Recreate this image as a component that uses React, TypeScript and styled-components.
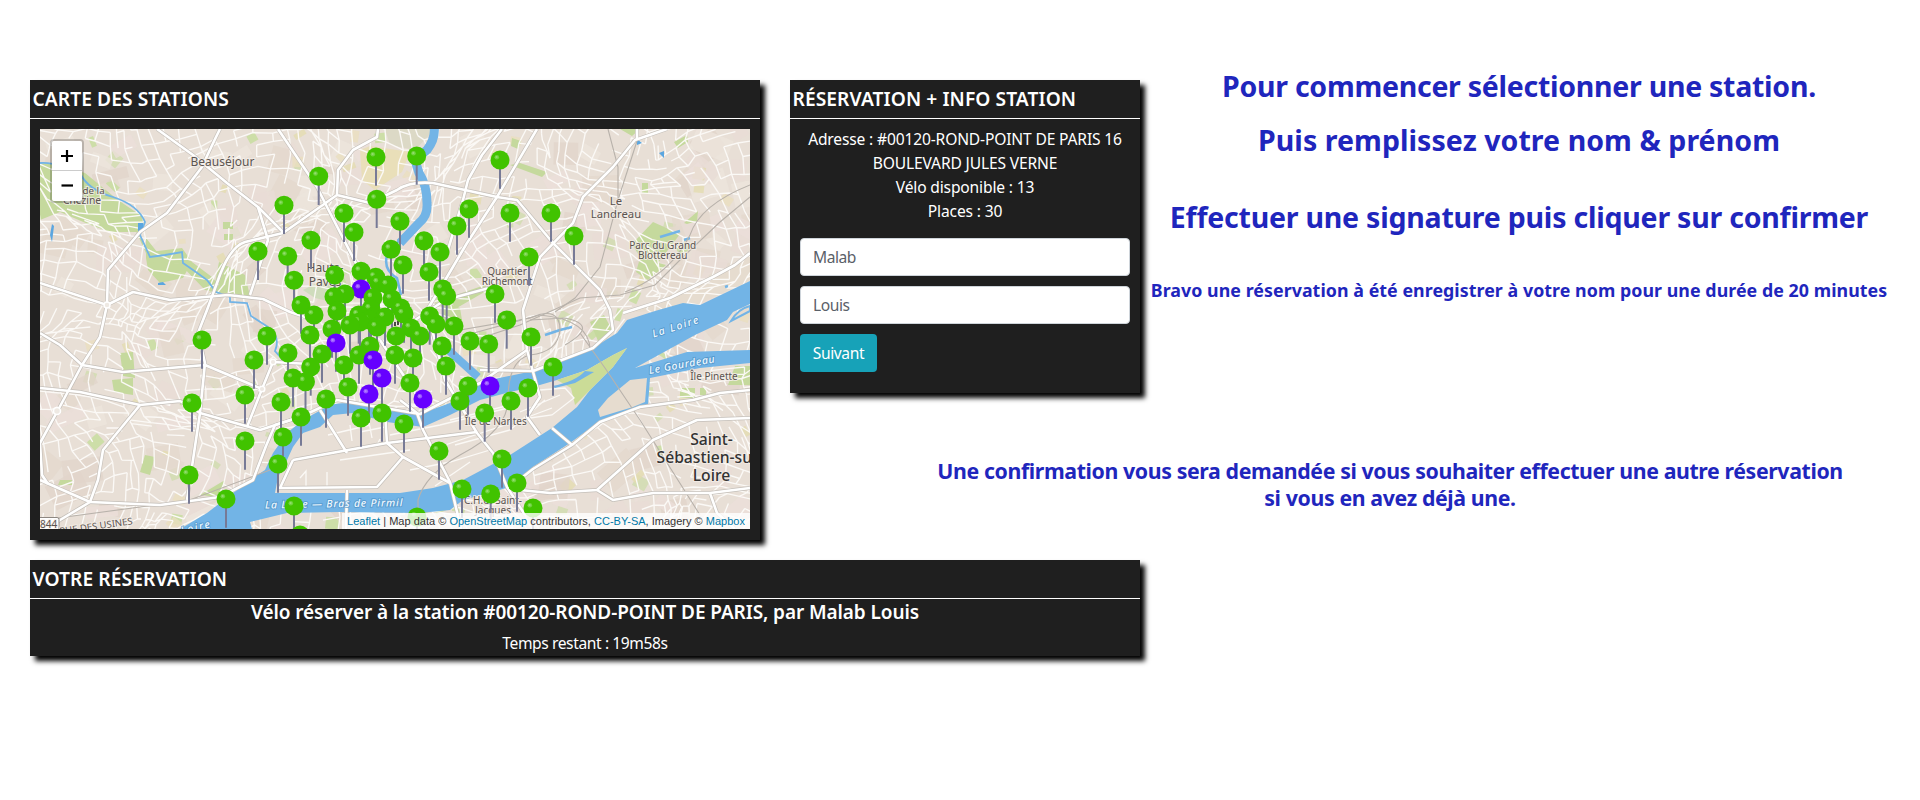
import React from 'react';
import styled, { createGlobalStyle } from 'styled-components';

const GlobalStyle = createGlobalStyle`
  * { box-sizing: border-box; }
  body { margin: 0; background: #fff; font: 15.6px/24px "Noto Sans", sans-serif; }
  h2, h3, p { margin: 0; }
`;

const Page = styled.main`
  display: grid;
  grid-template-columns: 730px 1100px;
  column-gap: 30px;
  row-gap: 20px;
  width: 1920px;
  height: 800px;
  padding: 80px 30px 0;
  align-content: start;
  overflow: hidden;
`;

const Card = styled.section<{ $height: number; $wide?: boolean }>`
  height: ${(p) => p.$height}px;
  width: ${(p) => (p.$wide ? '1110px' : 'auto')};
  background: #1f1f1f;
  color: #fff;
  box-shadow: 5px 5px 5px #000;
`;

const CardTitle = styled.h2`
  height: 39px;
  padding: 5px 0 0 2.5px;
  border-bottom: 1px solid #fff;
  font-size: 19.2px;
  font-weight: 600;
  line-height: 27px;
  letter-spacing: 0.08px;
`;

const SideColumn = styled.div`
  display: flex;
  flex-direction: column;
`;

const TopRow = styled.div`
  display: grid;
  grid-template-columns: 350px 738px;
  column-gap: 10px;
  height: 313px;
`;

const StationInfo = styled.div`
  padding-top: 8px;
  text-align: center;
  letter-spacing: -0.16px;
`;

const BookingForm = styled.form`
  display: flex;
  flex-direction: column;
  align-items: flex-start;
  gap: 10px;
  padding: 15px 10px 0;
`;

const NameInput = styled.input`
  width: 100%;
  height: 38px;
  padding: 0 12px;
  border: 1px solid #ced4da;
  border-radius: 4px;
  background: #fff;
  color: #5a6068;
  font: 15.6px "Noto Sans", sans-serif;
  letter-spacing: -0.45px;
  outline: none;
`;

const NextButton = styled.button`
  width: 77px;
  height: 38px;
  padding: 0;
  border: 0;
  border-radius: 4px;
  background: #17a2b8;
  color: #fff;
  font: 15.6px "Noto Sans", sans-serif;
  letter-spacing: -0.4px;
`;

const Guide = styled.div`
  display: flex;
  flex-direction: column;
  align-items: center;
  color: #1f26bd;
  white-space: nowrap;
  margin-top: -14px;
`;

const Step = styled.p<{ $gap?: number; $spacing?: number }>`
  margin-top: ${(p) => p.$gap ?? 0}px;
  font-size: 28.5px;
  font-weight: 700;
  line-height: 40px;
  letter-spacing: ${(p) => p.$spacing ?? 0}px;
`;

const Success = styled.p`
  margin-top: 40px;
  font-size: 17.8px;
  font-weight: 700;
  line-height: 26px;
  letter-spacing: 0.06px;
`;

const ConfirmNote = styled.p`
  margin: 64px 0 0 100px;
  text-align: center;
  color: #1f26bd;
  font-size: 21.3px;
  font-weight: 700;
  line-height: 27px;
  letter-spacing: -0.38px;
`;

const BookingTitle = styled.h3`
  font-size: 19px;
  font-weight: 600;
  line-height: 27px;
  letter-spacing: -0.09px;
  text-align: center;
`;

const TimeLeft = styled.p`
  margin-top: 5px;
  text-align: center;
  letter-spacing: -0.4px;
`;

const MapFrame = styled.div`
  position: relative;
  width: 710px;
  height: 400px;
  margin: 10px;
  overflow: hidden;
`;

const MapCanvas = styled.svg`
  display: block;
  width: 710px;
  height: 400px;
`;

const ZoomBar = styled.div`
  position: absolute;
  top: 10px;
  left: 10px;
  width: 34px;
  border: 2px solid rgba(0, 0, 0, 0.2);
  border-radius: 4px;
  background-clip: padding-box;
`;

const ZoomKey = styled.div<{ $first?: boolean }>`
  display: flex;
  align-items: center;
  justify-content: center;
  height: 30px;
  background: #fff;
  border-bottom: ${(p) => (p.$first ? '1px solid #ccc' : '0')};
  border-radius: ${(p) => (p.$first ? '2px 2px 0 0' : '0 0 2px 2px')};
`;

const Attribution = styled.div`
  position: absolute;
  right: 0;
  bottom: 0;
  height: 16px;
  padding: 0 5px;
  background: rgba(255, 255, 255, 0.8);
  color: #333;
  font: 11px/16px "Liberation Sans", sans-serif;
  letter-spacing: 0.01px;
  white-space: nowrap;
`;

const Credit = styled.span`
  color: #0078a8;
`;

/* Station heads as [x, y, purple?] */
const STATIONS: number[][] = [
  [376, 157], [416.7, 156], [318.7, 176.3], [284, 205.3], [376.7, 199.3], [344, 213.3], [354, 232.3], [400, 221.3],
  [311, 240.3], [258, 251.3], [287.7, 256.3], [391, 249.3], [403, 265], [294, 280.3], [334.7, 275], [361, 271.3],
  [301, 305], [361, 289, 1], [375.7, 277.3], [388, 285], [379, 283], [334, 296.7], [345, 294], [373, 297.7],
  [314, 315], [337, 311], [392, 299], [371, 309], [358.7, 315], [401, 308], [385, 317], [404, 314], [350, 325],
  [360, 322], [369, 320], [377, 327], [332, 329], [310, 335], [396, 336], [336, 343, 1], [370, 346], [359, 355],
  [288, 353], [322, 354], [310.7, 367], [344, 365], [395, 355], [373, 360, 1], [382, 378, 1], [293, 378],
  [305.5, 381.7], [267, 336], [424, 240.7], [440, 252], [429, 272], [442.7, 289], [446.7, 296], [495, 294],
  [506.7, 320], [429.7, 316], [436, 324], [454, 326], [411, 328], [420, 336], [442, 346], [470, 341],
  [488.7, 344], [446, 366], [413, 358], [410, 383], [468, 386], [490, 386, 1], [460, 401], [423, 399, 1],
  [369, 394, 1], [348, 387], [326, 399], [361, 418], [382, 413], [404, 424], [484.7, 413], [511, 401],
  [500, 160], [469, 209], [457, 226], [510, 213], [551, 213], [574, 236], [529, 257], [531, 337], [553, 367],
  [528, 388], [439, 451], [502, 459], [462, 489], [490.7, 494], [517, 483], [533, 508], [417, 517],
  [202, 340], [254, 360], [192, 403], [245, 395], [245, 441], [281, 402], [301, 417], [283, 437], [278, 464],
  [189, 475], [226, 499], [294, 506], [300, 535],
].sort((a, b) => a[1] - b[1]);

function seeded(start: number) {
  let s = start;
  return () => {
    s = (s * 1664525 + 1013904223) % 4294967296;
    return s / 4294967296;
  };
}

/* Side streets: a warped mesh with gaps. */
function sideStreets() {
  const rnd = seeded(41);
  const step = 11;
  const cols = 72;
  const rows = 44;
  const pts: number[][][] = [];
  for (let r = 0; r < rows; r++) {
    pts.push([]);
    for (let c = 0; c < cols; c++) {
      const x = 10 + c * step;
      const y = 100 + r * step;
      const dx = 20 * Math.sin(y / 38 + x / 90) + 9 * Math.sin(x / 21 - y / 33) + (rnd() - 0.5) * 5;
      const dy = 18 * Math.sin(x / 43 - y / 110) + 9 * Math.cos(y / 19 + x / 37) + (rnd() - 0.5) * 5;
      pts[r].push([x + dx, y + dy]);
    }
  }
  let d = '';
  const edge = (a: number[], b: number[]) => {
    d += `M${a[0].toFixed(1)} ${a[1].toFixed(1)}L${b[0].toFixed(1)} ${b[1].toFixed(1)}`;
  };
  for (let r = 0; r < rows - 1; r++) {
    for (let c = 0; c < cols - 1; c++) {
      if (rnd() < 0.66) edge(pts[r][c], pts[r][c + 1]);
      if (rnd() < 0.66) edge(pts[r][c], pts[r + 1][c]);
    }
  }
  return d;
}

function patches() {
  const rnd = seeded(97);
  const tones = ['#e3d8cd', '#e1d5cb', '#ece5dc', '#e3d8cd', '#eadfbf', '#e4dcb0', '#c6dd9c', '#cfdcae', '#e8dcd6', '#ebdfd9'];
  return Array.from({ length: 330 }, (_, i) => {
    const x = 35 + rnd() * 710;
    const y = 125 + rnd() * 400;
    const tone = Math.floor(rnd() * tones.length);
    const big = tone < 4 || tone > 7;
    const w = (big ? 14 : 5) + rnd() * (big ? 26 : 9);
    const h = (big ? 10 : 4) + rnd() * (big ? 18 : 9);
    return (
      <rect key={i} x={x} y={y} width={w} height={h} fill={tones[tone]} opacity={0.8}
        transform={`rotate(${Math.round(rnd() * 90 - 45)} ${x} ${y})`} />
    );
  });
}

const STREETS = sideStreets();

const MAIN_ROADS = [
  'M157 129L193 155L227 183L258 207L283 232',
  'M220 129Q212 145 202 167L167 213L140 232L108 270L107 305L100 337L82 365L57 412L40 443L42 475L48 484',
  'M40 283L107 305L133 292L170 300L228 295L263 299L290 312L320 322M250 295L268 240L258 207',
  'M283 233L245 242Q229 247 217 283L207 310L198 333L205 363L200 413L187 500',
  'M278 129L317 187L325 203L363 277',
  'M378 129L377 137L353 150L338 170L337 195L283 233M337 195L370 203L397 190Q410 181 433 183L497 197L517 200L553 243L600 290L610 310L613 330L593 348L533 371L480 370',
  'M502 129L482 155L468 180L463 200L447 253',
  'M537 129L497 197L467 243L447 277L427 310',
  'M667 129L635 140L613 167L583 197L573 223L540 257L523 310L527 350L540 397L527 417L540 435',
  'M637 140L637 129',
  'M40 333L60 345L82 365L123 372L205 365L262 389L247 427M262 389L273 362L310 364',
  'M40 388L80 392L140 405L180 401L200 413L260 430L300 417L337 400L420 414L480 383L527 350',
  'M140 405L103 450L98 480L90 502',
  'M40 480L90 502L160 505L220 497L253 480L266 446L275 425L300 417',
  'M90 502L60 520L47 530',
  'M400 400L417 413L423 430L450 482L461 529',
  'M427 310L445 380L477 433L493 453L507 487L525 515',
  'M510 489L550 493L597 490L653 440L697 420L750 418',
  'M597 490L613 500L653 493L710 493L750 488M710 493L717 513L735 529',
  'M510 487L533 469L572 445L600 422L640 407L693 400L720 393L750 390',
  'M623 313L670 298L713 277L735 265L750 253',
  'M380 340L420 400M400 330L445 300L500 285',
  'M320 410L347 453M293 460L387 443L477 432M293 460L280 488L377 487L403 457L387 443L385 412M403 457L450 483',
  'M347 490L346 529M552 428L572 445',
];

const RAILWAYS = [
  'M580 333L605 368L640 420L700 515',
  'M750 197L720 222L683 257L655 285L620 295L580 298L520 325L460 345',
  'M750 185Q700 205 690 235Q670 275 625 292',
  'M608 129L618 167L618 200L600 267L575 298L555 312',
  'M637 141L618 200',
  'M460 330L530 318Q560 305 560 330Q558 352 530 355Q508 360 508 400Q508 430 460 455Q425 475 418 500L418 515',
  'M565 345Q600 325 565 318L530 320M470 334L540 315Q590 320 590 350',
  'M58 518L140 507L187 501L270 470',
];

type LabelProps = { x: number; y: number; size?: number; anchor?: 'start' | 'middle'; heavy?: boolean; children: React.ReactNode };

const PlaceText = styled.text<{ $size: number; $heavy?: boolean }>`
  font: ${(p) => (p.$heavy ? 500 : 400)} ${(p) => p.$size}px "Noto Sans", sans-serif;
  fill: ${(p) => (p.$heavy ? '#333' : '#5b5450')};
  stroke: #f3ede7;
  stroke-width: 2px;
  stroke-opacity: 0.8;
  paint-order: stroke;
`;

const WaterText = styled.text`
  font: italic 500 10.5px "Noto Sans", sans-serif;
  fill: #eff8fe;
  stroke: #4a8fc4;
  stroke-width: 1.8px;
  stroke-opacity: 0.7;
  paint-order: stroke;
  letter-spacing: 1.5px;
`;

function Label({ x, y, size = 10, anchor = 'middle', heavy, children }: LabelProps) {
  return (
    <PlaceText x={x} y={y} textAnchor={anchor} $size={size} $heavy={heavy}>{children}</PlaceText>
  );
}

function Pin({ x, y, busy }: { x: number; y: number; busy: boolean }) {
  return (
    <g transform={`translate(${x} ${y})`}>
      <path d="M0 8V28.7" stroke="#777a96" strokeWidth="2" />
      <circle r="9.5" fill={busy ? '#6600ff' : '#41c300'} />
      <circle cx="-3.2" cy="-2.8" r="2.3" fill="#fff" opacity={busy ? 0.35 : 0.25} />
      <circle cx="-3.4" cy="-3" r="1.1" fill="#fff" opacity="0.25" />
    </g>
  );
}

function StationMap() {
  return (
    <MapFrame>
      <MapCanvas viewBox="40 129 710 400">
        <rect x="40" y="129" width="710" height="400" fill="#e8dfd6" />
        {patches()}
        <g fill="#c5d99d">
          <path d="M40 163L60 165L85 173L118 200L143 217L144 232L110 232L88 224L60 212L40 220Z" />
          <path d="M146 238L165 262L190 265L183 278L160 283L148 270L146 258Z M219 262L245 275L250 296L228 294L214 288Z" />
          <path d="M135 229L150 252L182 248L192 262L212 277L226 294L205 290L180 264L150 262Z" />
          <path d="M120 353L133 352L135 378L123 376Z M112 380L133 378L133 395L114 392Z" />
          <path d="M653 222L680 234L668 250L657 264L640 257L632 244Z M640 258L666 265L648 280L636 272Z" />
          <path d="M223 222H233V229H223Z M224 234H233V240H224Z M510 165L520 163L547 172L542 177Z M512 138L521 141L518 149L511 146Z" />
          <path d="M620 129L640 129L632 136Z M674 142L687 135L688 142L678 148Z M642 183H648V193H642Z M450 297L485 285L488 290L455 309Z" />
          <path d="M684 223L698 211L697 221L687 224Z M590 322L604 315L612 330L598 341Z M440 300L460 308L462 320L445 322Z" />
          <path d="M680 388H695V398H680Z M700 388H706V396H700Z M735 366H750V385H728Z" />
          <path d="M60 480H72V485H58Z M145 455L155 457L150 475L140 472Z M200 495L225 480L218 497Z" />
        </g>
        <path d="M295 455L385 442L402 458L376 486L280 488Z M623 313L713 278L750 255V280L690 308Z" fill="#e6dccf" />
        <path d="M360 150L370 146L410 152L402 172L375 190L362 180Z" fill="#e9dfb2" opacity="0.8" />
        <path d="M385 129H435L415 150L390 145Z" fill="#dcd9c6" />
        <path d="M323 280L350 285L345 305L315 298L303 290Z" fill="#cfdcbc" />
        <path d={STREETS} fill="none" stroke="#fbf9f6" strokeWidth="1.35" />

        <g fill="#72b4e6">
          <path d="M180 529L207 513L250 480L265 470L273 453L287 433L303 420L330 405Q350 400 380 408L420 414L450 403L480 382L533 371L593 348L617 333L627 320L655 311L683 303L700 305L750 281V304L733 312L727 320L695 335L635 368L687 352L718 351L750 350V363L700 368L650 378L648 405L640 408L600 421L570 443L533 467L510 487L463 500L450 510L420 513L340 512L287 513L250 522L252 529Z" />
        </g>
        <path d="M627 348L613 367L590 390L577 407L552 428L510 455L463 480L433 488L400 493L275 493L278 477L287 460L293 447L303 433L320 427L333 415L353 413L387 422L423 427L450 415L480 400L510 392L533 387L557 380L587 370L613 355Z" fill="#e8dfd6" />
        <path d="M627 348L613 367L590 390L575 405L571 388L557 380L587 370L613 355Z" fill="#cbdc97" />
        <path d="M552 386Q575 382 585 371L594 372L575 383L555 388Z" fill="#72b4e6" />
        <path d="M630 380L647 378L645 402L633 407L600 417L598 410L608 398Z" fill="#e6dccf" />
        <path d="M731 321Q738 309 750 306V311Z" fill="#e6dccf" stroke="#72b4e6" strokeWidth="2" />
        <g fill="none" stroke="#fbf9f6" strokeWidth="1.3">
          <path d="M300 478L306 471V487M327 472V486M340 460L410 450M352 441L350 425M372 438L369 422M360 432L385 427M390 435L440 425L520 405M450 420L510 405M430 450L520 420L552 408M455 445L510 430L545 400M410 470L450 462L490 450M435 486L470 462M540 390L565 388L574 398L552 415L530 418M520 412L560 395M328 435L370 425M376 447L380 439" />
        </g>
        <g fill="none" stroke="#72b4e6">
          <path d="M434 126Q436 138 427 150L415 160L419 173Q427 185 427 203Q428 216 419 223L400 243" strokeWidth="9" />
          <path d="M401 238L387 255Q383 270 397 278L401 295" strokeWidth="2.5" />
          <path d="M446 348L478 377" strokeWidth="8" />
          <path d="M40 163Q50 162 63 167L80 173Q88 190 113 197Q138 205 145 222L140 235L150 257L165 255L182 252L183 263Q196 272 207 280L216 292L230 297V302L247 303L251 316L268 327Q281 337 275 351L283 360" strokeWidth="1.8" />
          <path d="M545 335L560 330L572 327M660 237L680 231M684 240L690 238M725 287L728 286" strokeWidth="2.5" />
        </g>
        <path d="M138 223H143V232H138Z M158 283L163 282L166 285H158Z M637 139L642 143L637 145Z M659 153L664 151V158Z M52 224L54 226L52 242L50 235Z" fill="#5ba6e0" />

        <g fill="none" stroke="#b8b2ab" strokeWidth="1.1">
          {RAILWAYS.map((d) => <path key={d} d={d} />)}
        </g>
        <g fill="none" strokeLinejoin="round">
          {MAIN_ROADS.map((d) => <path key={d} d={d} stroke="#c4bfb9" strokeWidth="3.9" />)}
          {MAIN_ROADS.map((d) => <path key={`${d}-top`} d={d} stroke="#fff" strokeWidth="2.6" />)}
        </g>
        <g fill="#eee9e3" stroke="#fff" strokeWidth="1.5">
          <circle cx="107" cy="305" r="3" />
          <circle cx="57" cy="411" r="3.5" />
          <circle cx="262" cy="389" r="2.8" />
          <circle cx="273" cy="362" r="2.8" />
        </g>

        <Label x={222.5} y={166} size={12}>Beauséjour</Label>
        <Label x={82.5} y={193.5} size={9.8} anchor="start">de la</Label>
        <Label x={82} y={203.7} size={10.3}>Chézine</Label>
        <Label x={325} y={271.5} size={12}>Hauts-</Label>
        <Label x={325} y={286} size={12}>Pavés</Label>
        <Label x={616} y={204.7} size={11.3}>Le</Label>
        <Label x={616} y={217.7} size={11.3}>Landreau</Label>
        <Label x={662.7} y={248.7}>Parc du Grand</Label>
        <Label x={662.7} y={258.7}>Blottereau</Label>
        <Label x={507} y={275.3}>Quartier</Label>
        <Label x={507} y={285.2}>Richemont</Label>
        <Label x={714} y={380}>Île Pinette</Label>
        <Label x={495.7} y={425.3}>Île de Nantes</Label>
        <Label x={493} y={503.5}>C.H.U. Saint-</Label>
        <Label x={493} y={513.5}>Jacques</Label>
        <Label x={711.5} y={444.7} size={15.7} heavy>Saint-</Label>
        <Label x={656.5} y={462.7} size={15.7} anchor="start" heavy>Sébastien-sur</Label>
        <Label x={711.5} y={480.7} size={15.7} heavy>Loire</Label>
        <WaterText textAnchor="middle" transform="translate(677 330) rotate(-18)">La Loire</WaterText>
        <WaterText textAnchor="middle" transform="translate(683 368) rotate(-10)" textLength="68">Le Gourdeau</WaterText>
        <WaterText transform="translate(265 508.5) rotate(-1)" textLength="139">La Loire — Bras de Pirmil</WaterText>
        <WaterText transform="translate(164 539) rotate(-14)">La Loire</WaterText>
        <rect x="34" y="517.5" width="25" height="14" rx="2" fill="#fff" stroke="#8d8781" />
        <Label x={40} y={527.5} anchor="start">844</Label>
        <PlaceText transform="translate(60 534.5) rotate(-8)" $size={9.5}>RUE DES USINES</PlaceText>
        <path d="M392 325V321M395 326V322M398 325V321" stroke="#222" strokeWidth="1.6" />

        {STATIONS.map(([x, y, busy]) => <Pin key={`${x}-${y}`} x={x} y={y} busy={Boolean(busy)} />)}
      </MapCanvas>
      <ZoomBar>
        <ZoomKey $first>
          <svg width="14" height="14" viewBox="0 0 14 14"><path d="M7 1V13M1 7H13" stroke="#000" strokeWidth="2.2" /></svg>
        </ZoomKey>
        <ZoomKey>
          <svg width="14" height="14" viewBox="0 0 14 14"><path d="M1.5 6.5H13" stroke="#000" strokeWidth="2.2" /></svg>
        </ZoomKey>
      </ZoomBar>
      <Attribution>
        <Credit>Leaflet</Credit> | Map data © <Credit>OpenStreetMap</Credit> contributors, <Credit>CC-BY-SA</Credit>, Imagery © <Credit>Mapbox</Credit>
      </Attribution>
    </MapFrame>
  );
}

export default function App() {
  return (
    <>
      <GlobalStyle />
      <Page>
        <Card $height={460}>
          <CardTitle>CARTE DES STATIONS</CardTitle>
          <StationMap />
        </Card>
        <SideColumn>
          <TopRow>
            <Card $height={313}>
              <CardTitle>RÉSERVATION + INFO STATION</CardTitle>
              <StationInfo>
                <p>Adresse : #00120-ROND-POINT DE PARIS 16<br />BOULEVARD JULES VERNE</p>
                <p>Vélo disponible : 13</p>
                <p>Places : 30</p>
              </StationInfo>
              <BookingForm>
                <NameInput defaultValue="Malab" />
                <NameInput defaultValue="Louis" />
                <NextButton type="button">Suivant</NextButton>
              </BookingForm>
            </Card>
            <Guide>
              <Step $spacing={-0.27}>Pour commencer sélectionner une station.</Step>
              <Step $gap={14} $spacing={0.06}>Puis remplissez votre nom &amp; prénom</Step>
              <Step $gap={37} $spacing={-0.22}>Effectuer une signature puis cliquer sur confirmer</Step>
              <Success>Bravo une réservation à été enregistrer à votre nom pour une durée de 20 minutes</Success>
            </Guide>
          </TopRow>
          <ConfirmNote>
            Une confirmation vous sera demandée si vous souhaiter effectuer une autre réservation<br />
            si vous en avez déjà une.
          </ConfirmNote>
        </SideColumn>
        <Card $height={96} $wide>
          <CardTitle>VOTRE RÉSERVATION</CardTitle>
          <BookingTitle>Vélo réserver à la station #00120-ROND-POINT DE PARIS, par Malab Louis</BookingTitle>
          <TimeLeft>Temps restant : 19m58s</TimeLeft>
        </Card>
      </Page>
    </>
  );
}
